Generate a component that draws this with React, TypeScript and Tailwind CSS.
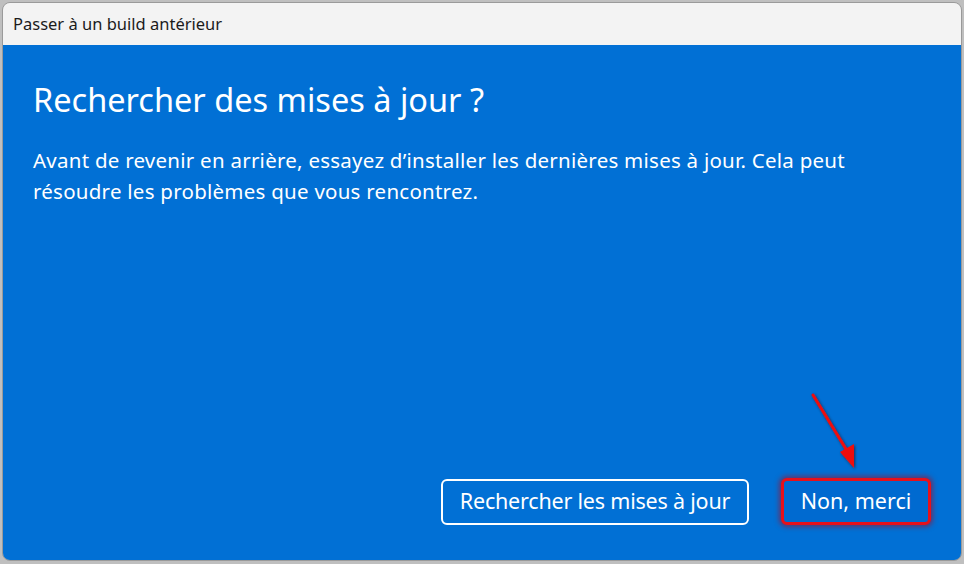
export default function App() {
  return (
    <div className="w-[964px] h-[564px] bg-[#bfbfbf] pt-[2px] pl-[2px] pr-[2px] pb-[3px] font-['Noto_Sans',_sans-serif]">
      <div className="relative h-full flex flex-col rounded-[8px] overflow-hidden border border-[#9a9a9a]">
        <div className="h-[42px] shrink-0 bg-[#f3f3f3] flex items-center px-[10px] text-[16.5px] text-[#1b1b1b]">
          Passer à un build antérieur
        </div>
        <div className="flex-1 bg-[#0170d5] flex flex-col px-[30px] pt-[33px] pb-[35px] text-white">
          <h1 className="text-[32.5px] leading-[44px] font-normal">Rechercher des mises à jour ?</h1>
          <p className="mt-[23px] text-[20.5px] leading-[31px] w-[860px] tracking-[0.25px]">
            Avant de revenir en arrière, essayez d’installer les dernières mises à jour. Cela peut résoudre les problèmes que vous rencontrez.
          </p>
          <div className="flex-1" />
          <div className="flex justify-end items-center gap-[32px]">
            <button className="w-[308px] h-[46px] rounded-[6px] border-2 border-white text-[21.5px] tracking-[-0.2px] text-white">
              Rechercher les mises à jour
            </button>
            <button className="w-[150px] h-[47px] rounded-[6px] border-[3px] border-[#e8101a] shadow-[0_0_5px_2px_rgba(180,0,20,0.55)] text-[21.5px] text-white bg-[#006ad0]">
              Non, merci
            </button>
          </div>
        </div>
        <svg className="absolute left-[799px] top-[383px]" width="70" height="90" viewBox="0 0 70 90">
          <defs>
            <filter id="sh" x="-30%" y="-30%" width="160%" height="160%">
              <feDropShadow dx="1" dy="1" stdDeviation="1.5" floodColor="#300" floodOpacity="0.6" />
            </filter>
          </defs>
          <g filter="url(#sh)">
            <line x1="11" y1="9" x2="47" y2="68" stroke="#ee1111" strokeWidth="3" strokeLinecap="round" />
            <polygon points="52,82 38,66 52,58" fill="#ee1111" />
          </g>
        </svg>
      </div>
    </div>
  )
}
